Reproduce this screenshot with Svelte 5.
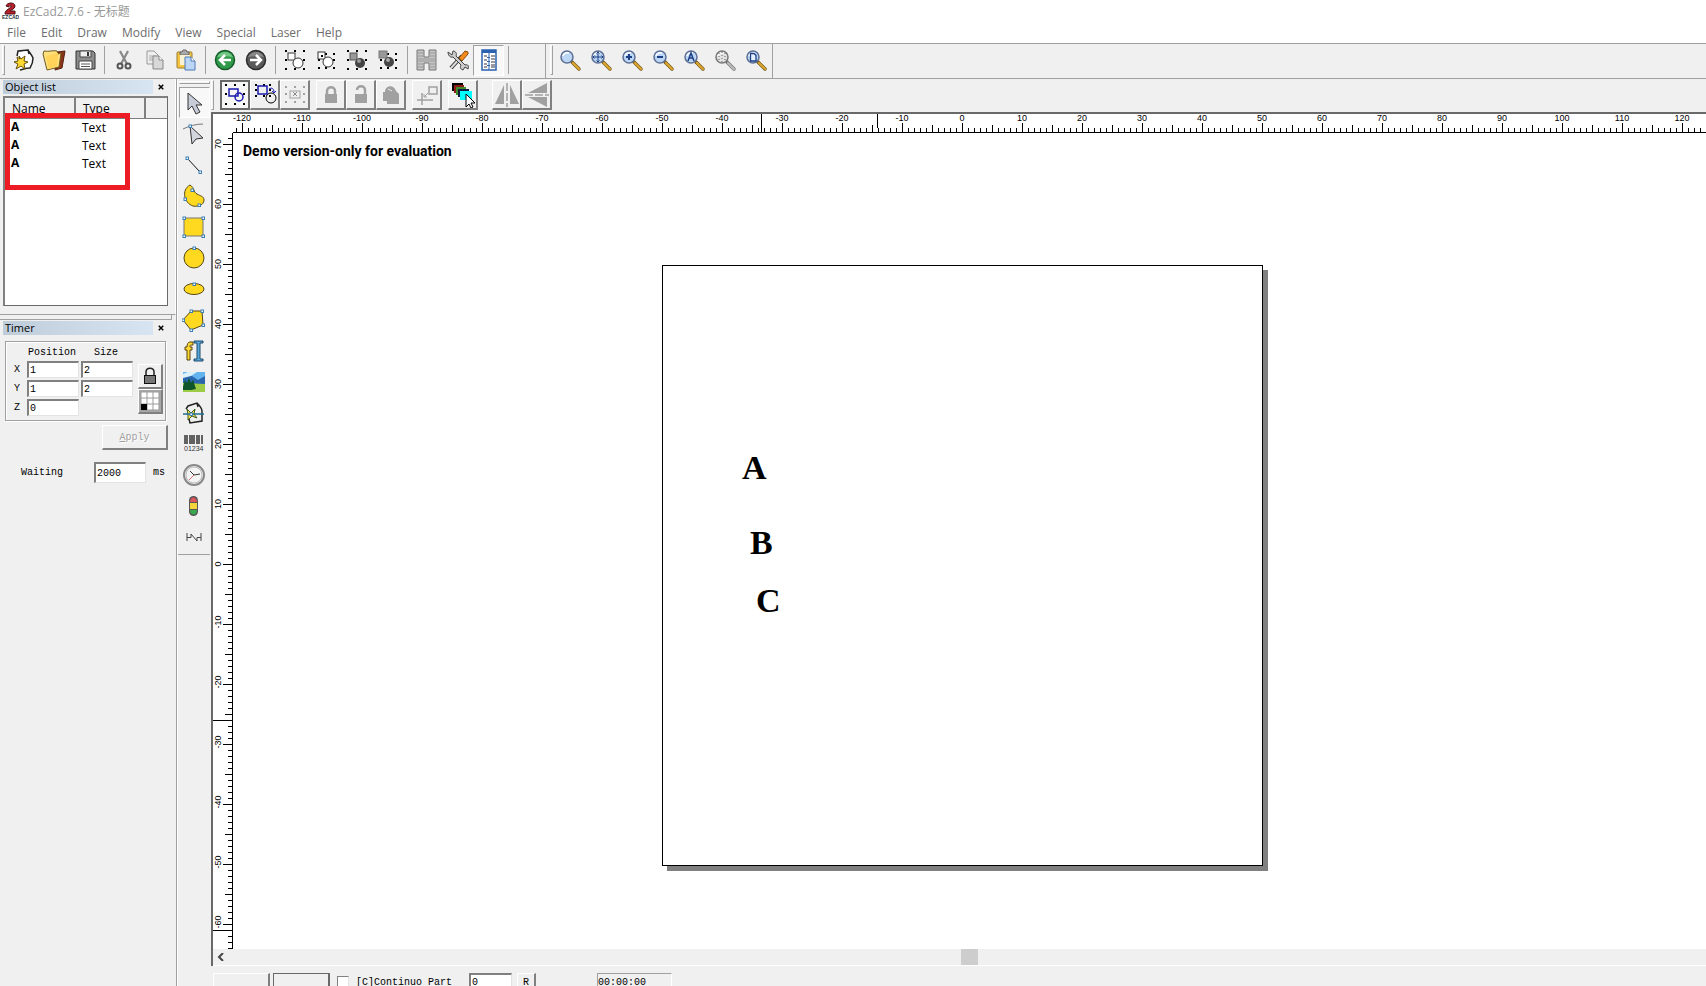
<script lang="ts">
	type Tool = { icon: string; label: string; active?: boolean; disabled?: boolean };

	const menus = ['File', 'Edit', 'Draw', 'Modify', 'View', 'Special', 'Laser', 'Help'];

	const fileTools: Tool[][] = [
		[
			{ icon: 'new', label: 'New' },
			{ icon: 'open', label: 'Open' },
			{ icon: 'save', label: 'Save' },
		],
		[
			{ icon: 'cut', label: 'Cut' },
			{ icon: 'copy', label: 'Copy' },
			{ icon: 'paste', label: 'Paste' },
		],
		[
			{ icon: 'undo', label: 'Undo' },
			{ icon: 'redo', label: 'Redo' },
		],
		[
			{ icon: 'combine', label: 'Combine' },
			{ icon: 'uncombine', label: 'Uncombine' },
			{ icon: 'group', label: 'Group' },
			{ icon: 'ungroup', label: 'Ungroup' },
		],
		[
			{ icon: 'hatch', label: 'Hatch' },
			{ icon: 'options', label: 'Options' },
			{ icon: 'list', label: 'Object list', active: true },
		],
	];

	const zoomTools: Tool[] = [
		{ icon: 'zoom', label: 'Zoom' },
		{ icon: 'zoomPan', label: 'Pan' },
		{ icon: 'zoomIn', label: 'Zoom in' },
		{ icon: 'zoomOut', label: 'Zoom out' },
		{ icon: 'zoomAll', label: 'Zoom all' },
		{ icon: 'zoomSel', label: 'Zoom selection' },
		{ icon: 'zoomPage', label: 'Zoom page' },
	];

	const pickTools: Tool[][] = [
		[
			{ icon: 'pick', label: 'Pick', active: true },
			{ icon: 'rotate', label: 'Rotate' },
			{ icon: 'center', label: 'Center', disabled: true },
		],
		[
			{ icon: 'lock', label: 'Lock', disabled: true },
			{ icon: 'unlock', label: 'Unlock', disabled: true },
			{ icon: 'unlockAll', label: 'Unlock all', disabled: true },
		],
		[{ icon: 'origin', label: 'Put to origin', disabled: true }],
		[{ icon: 'layers', label: 'Pick by pen' }],
		[
			{ icon: 'mirrorH', label: 'Mirror horizontal', disabled: true },
			{ icon: 'mirrorV', label: 'Mirror vertical', disabled: true },
		],
	];

	const drawTools: Tool[] = [
		{ icon: 'arrow', label: 'Select', active: true },
		{ icon: 'node', label: 'Edit nodes' },
		{ icon: 'line', label: 'Line' },
		{ icon: 'curve', label: 'Curve' },
		{ icon: 'rect', label: 'Rectangle' },
		{ icon: 'circle', label: 'Circle' },
		{ icon: 'ellipse', label: 'Ellipse' },
		{ icon: 'polygon', label: 'Polygon' },
		{ icon: 'text', label: 'Text' },
		{ icon: 'bitmap', label: 'Bitmap' },
		{ icon: 'vector', label: 'Vector file' },
		{ icon: 'barcode', label: 'Barcode' },
		{ icon: 'timer', label: 'Timer' },
		{ icon: 'input', label: 'Input port' },
		{ icon: 'output', label: 'Output port' },
	];

	const lens = (inner: string, ring = '#5d6f94', fill = '#bcd6f5', handle = '#d9a72e', edge = '#7a5a1e') => `
		<path d="M13 14l7 7" stroke="${edge}" stroke-width="3.5" stroke-linecap="round"/>
		<path d="M14 15l6 6" stroke="${handle}" stroke-width="2.2" stroke-linecap="round"/>
		<circle cx="8" cy="9" r="6" fill="${fill}" stroke="${ring}" stroke-width="1.5"/>
		<path d="M4 8a4.5 4.5 0 0 1 6-3" stroke="#fff" stroke-width="1.5"/>${inner}`;

	const square = (x: number, y: number, c: string) =>
		`<rect x="${x - 1}" y="${y - 1}" width="2" height="2" fill="${c}"/>`;

	const dots = (xs: number[], ys: number[], c = '#000') =>
		xs.flatMap((x, i) => ys.filter((_, j) => i !== 1 || j !== 1).map((y) => square(x, y, c))).join('');

	const handles = (points: number[][]) =>
		points
			.map(([x, y]) => `<rect x="${x - 1}" y="${y - 1}" width="2.5" height="2.5" fill="#fff" stroke="#3b7fb5"/>`)
			.join('');

	const padlock = '<path d="M7 12h12v9H7z" fill="#a0a0a0"/>';

	const icons: Record<string, string> = {
		new: `<path d="M7 3c4 0 6-1 10-1 1 2 4 5 5 8 0 4-1 7-3 10-4 0-6 1-10 2-2-6-4-12-2-19z" fill="#fff"/>
			<path d="M6 8l1-5c4 0 6-1 10-1 1 2 4 5 5 8 0 4-1 7-3 10-4 0-6 1-10 2M17 2l1 4" fill="none" stroke="#222" stroke-width="1.5"/>
			<path d="M8 8l2 3 4-3-1 5 4 1-4 2 1 5-4-3-5 3 2-5-4-2 4-1-1-4 3 2z" fill="#ffd932" stroke="#66500a"/>`,
		open: `<path d="M15 4l8-1-3 17-7 2z" fill="#8c3417" stroke="#54200c"/>
			<path d="M2 3c5 1 9-1 13 0l1 3 3-1-2 14-12 3-4-16z" fill="#ffe07a" stroke="#6d5a20"/>
			<path d="M4 8l12-3-1 13-8 3z" fill="#ffd25a"/>`,
		save: `<path d="M3 3h17l2 2v16H3z" fill="#8d8d8d" stroke="#333"/>
			<path d="M7 3h11v6H7z" fill="#eee" stroke="#444"/><path d="M14 4h2v4h-2z" fill="#333"/>
			<path d="M6 13h13v8H6z" fill="#fff" stroke="#444"/><path d="M8 16h9M8 18.5h9" stroke="#555"/>`,
		cut: `<path d="M8 3l7 13M16 3L9 16" stroke="#888" stroke-width="2.2"/>
			<circle cx="8" cy="18" r="2.5" fill="none" stroke="#555" stroke-width="2"/>
			<circle cx="16" cy="18" r="2.5" fill="none" stroke="#555" stroke-width="2"/>`,
		copy: `<path d="M4 3h7l4 4v9H4z" fill="#eee" stroke="#999"/><path d="M6 8h7M6 10h7M6 12h7" stroke="#aaa"/>
			<path d="M10 8h6l4 4v9H10z" fill="#d8d8d8" stroke="#888"/><path d="M16 8v4h4" fill="#fff" stroke="#888"/>`,
		paste: `<rect x="3" y="4" width="15" height="16" rx="1" fill="#f4c542" stroke="#9c7c2c"/>
			<path d="M6 7V4h2l1-2h3l1 2h2v3z" fill="#aaa" stroke="#666"/><path d="M6 7h10v10H6z" fill="#faf2d4"/>
			<path d="M11 9h6l4 4v9H11z" fill="#bcd7f5" stroke="#4e78b4"/><path d="M17 9v4h4" fill="#fff" stroke="#4e78b4"/>`,
		undo: `<circle cx="12" cy="12" r="9.500" fill="#2f9a4a" stroke="#175c2c" stroke-width="1.5"/>
			<path d="M4 9a9 9 0 0 1 16 0c-5-1-11-1-16 0z" fill="#72c985"/>
			<path d="M18 12H7m5-5l-5 5 5 5" fill="none" stroke="#fff" stroke-width="2.5"/>`,
		redo: `<circle cx="12" cy="12" r="9.500" fill="#5a5a5a" stroke="#2c2c2c" stroke-width="1.5"/>
			<path d="M4 9a9 9 0 0 1 16 0c-5-1-11-1-16 0z" fill="#888"/>
			<path d="M6 12h11m-5-5l5 5-5 5" fill="none" stroke="#fff" stroke-width="2.5"/>`,
		combine: `${dots([3, 12, 21], [3, 12, 21])}<rect x="5" y="5" width="7" height="7" fill="#fff" stroke="#333"/><circle cx="15" cy="15" r="5" fill="#fff" stroke="#333"/>`,
		uncombine: `${dots([5, 12, 20], [6, 12, 20])}<rect x="4" y="4" width="7" height="7" fill="#fff" stroke="#333"/>${square(8, 8, '#000')}<circle cx="14" cy="14" r="5" fill="#fff" stroke="#333"/>`,
		group: `${dots([3, 12, 21], [3, 12, 21])}<rect x="5" y="5" width="7" height="7" fill="#999" stroke="#555"/><circle cx="15" cy="15" r="5" fill="#444"/><circle cx="14" cy="13" r="2" fill="#999"/>`,
		ungroup: `${dots([5, 12, 20], [6, 12, 20])}<rect x="3" y="3" width="8" height="7" fill="#999" stroke="#777"/><circle cx="13" cy="14" r="5" fill="#444"/><circle cx="12" cy="12" r="2" fill="#aaa"/>`,
		hatch: `<path d="M2 2h7v7h5V2h7v20h-7v-7H9v7H2z" fill="#c4c4c4" stroke="#777"/>
			<path d="M2 5h7M2 8h7M2 11h19M2 13h19M2 16h7M2 19h7M14 5h7M14 8h7M14 16h7M14 19h7" stroke="#999"/>`,
		options: `<path d="M5 20L16 8" stroke="#333" stroke-width="4"/><path d="M5 20L16 8" stroke="#ddd" stroke-width="2"/>
			<path d="M13 10l6-7 3 1v2l-6 7z" fill="#f28a1e" stroke="#8a4a0a"/>
			<path d="M2 4l4 3 1-4c3 0 4 3 3 5l9 9c3-1 4 1 3 4l-3-2-2 3c-3-1-3-3-2-5L7 9C4 10 2 7 2 4z" fill="#ccc" stroke="#444"/>`,
		list: `<path d="M5 2h14v20H5z" fill="#fff" stroke="#2b62b0" stroke-width="1.5"/><path d="M5 2h14v3H5z" fill="#2b62b0"/>
			<path d="M12 5v17" stroke="#2b62b0"/><path d="M10 9.500h3M10 13.500h3M10 17.500h3" stroke="#2b62b0"/>
			<path d="M7 8h3M7 12h3M7 16h3M7 19h3M14 8h4M14 11h4M14 14h4M14 17h4M14 19h4" stroke="#334"/>`,
		zoom: lens(''),
		zoomPan: lens('<path d="M8 4v10M3 9h10M6.5 5.5L8 4l1.5 1.5M6.5 12.5L8 14l1.5-1.5M4.5 7.5L3 9l1.5 1.5M11.5 7.5L13 9l-1.5 1.5" fill="none" stroke="#1d3f84"/>'),
		zoomIn: lens('<path d="M8 6v6M5 9h6" stroke="#1d3f84" stroke-width="2"/>'),
		zoomOut: lens('<path d="M5 9h6" stroke="#1d3f84" stroke-width="2"/>'),
		zoomAll: lens('<path d="M5 13l3-8 3 8M6 10h4" fill="none" stroke="#1d3f84" stroke-width="1.5"/>'),
		zoomSel: lens('<path d="M5 5v9M8 4v10M11 5v9" stroke="#666" stroke-dasharray="1 2"/>', '#777', '#e2e2e2', '#bbb', '#777'),
		zoomPage: lens('<path d="M5.5 5.5H9l2 2V13H5.5z" fill="#e6f0ff" stroke="#1d3f84" stroke-width="1.3"/>'),

		pick: `${dots([4, 13, 22], [3, 12, 22])}<rect x="7" y="7" width="9" height="7" fill="none" stroke="#1a1aae" stroke-width="1.5"/><circle cx="17" cy="15" r="4" fill="none" stroke="#1a1aae" stroke-width="1.5"/>`,
		rotate: `${dots([4, 12, 18], [3, 8, 14])}<rect x="6" y="4" width="9" height="8" fill="none" stroke="#1a1aae" stroke-width="1.5"/><circle cx="19" cy="16" r="5" fill="none" stroke="#000"/><path d="M17 7c3-2 5 0 5 3m-2-1l2 2 2-2" fill="none" stroke="#1a1aae"/>`,
		center: `${dots([4, 13, 22], [5, 12, 20], '#a0a0a0')}<rect x="8" y="9" width="10" height="7" fill="#f0f0f0" stroke="#a0a0a0"/><path d="M11 10l4 4M15 10l-4 4" stroke="#888"/>`,
		lock: `${padlock}<path d="M9 12V9c0-5 8-5 8 0v3" fill="none" stroke="#a0a0a0" stroke-width="2.5"/>`,
		unlock: `${padlock}<path d="M9 8c0-5 8-5 8 0v4" fill="none" stroke="#a0a0a0" stroke-width="2.5"/>`,
		unlockAll: `<path d="M5 10h2c0-7 9-8 11-1l3 3v10H9v-3H5z" fill="#a0a0a0"/><path d="M10 7l4 2" stroke="#eee"/>`,
		origin: `<path d="M3 18h16M8 11v12" stroke="#a0a0a0" stroke-width="1.5"/><rect x="15" y="5" width="8" height="7" fill="none" stroke="#a0a0a0" stroke-width="1.5"/><path d="M14 11l-4 4m0-3v3h3" fill="none" stroke="#a0a0a0"/>`,
		layers: `<path d="M2 1h11v8H2z" fill="#000"/><path d="M4 3h10v8H4z" fill="#8d1a14"/><path d="M6 5h10v8H6z" fill="#3c8d2a"/><path d="M8 7h11v8H8z" fill="#111a3c"/><path d="M10 9h12v9H10z" fill="#0ff"/>
			<path d="M16 12v13l3-3 2 4 2-1-2-4h4z" fill="#fff" stroke="#000"/>`,
		mirrorH: `<path d="M10 3v19H1zM16 3v19h9z" fill="#a0a0a0"/><path d="M13 1v24" stroke="#777" stroke-dasharray="8 2"/>`,
		mirrorV: `<path d="M23 1v10H4zM23 25V15H4z" fill="#a0a0a0"/><path d="M1 13h24" stroke="#777" stroke-dasharray="8 2"/>`,

		arrow: `<path d="M6 2v17l4-4 4 8 4-2-4-7h6z" fill="#c8ccd8" stroke="#333"/>`,
		node: `<path d="M1 7c6-3 13-5 20-5" fill="none" stroke="#777"/><path d="M8 4l2 18 4-5 7-1z" fill="#d3d6df" stroke="#333"/>${handles([[8, 4]])}`,
		line: `<path d="M5 5l13 14" stroke="#111"/>${handles([[5, 5], [18, 19]])}`,
		curve: `<path d="M8 1c-9 5-6 18 3 21 5 1 11-1 11-6 0-4-4-4-7-6-4-2-2-6-7-9z" fill="#ffd91f" stroke="#55481a"/>${handles([[10, 6], [3, 15], [17, 21]])}`,
		rect: `<rect x="2" y="3" width="19" height="18" fill="#ffd91f" stroke="#777"/>${handles([[2, 3], [21, 3], [2, 21], [21, 21]])}`,
		circle: `<circle cx="12" cy="12" r="10" fill="#ffd91f" stroke="#55481a"/>${handles([[12, 2]])}`,
		ellipse: `<ellipse cx="12" cy="12" rx="10" ry="5.5" fill="#ffd91f" stroke="#55481a"/>${handles([[12, 7]])}`,
		polygon: `<path d="M1 12l8-9h11l1 14-12 5z" fill="#ffd91f" stroke="#55481a"/>${handles([[1, 12], [9, 3], [20, 3], [21, 17], [9, 22]])}`,
		text: `<path d="M11 3H8C6 3 5 5 5 8H3v3h2v10h3V11h2V8H8c0-2 0-2 3-2z" fill="#ffd932" stroke="#54430f"/>
			<path d="M12 2h9v2h-3v16h3v2h-9v-2h3V4h-3z" fill="#58a9dc" stroke="#1c4a6c"/>`,
		bitmap: `<path d="M1 2h22v20H1z" fill="#63b4ee"/><path d="M1 8l6-4 9 6 7-4v9H1z" fill="#2a66ae"/><path d="M1 4l5-2h9l-6 4-8 2z" fill="#dceffc"/>
			<path d="M1 13l22 1v8H1z" fill="#9ecb45"/><path d="M1 17l2-7 2 3 2-5 2 5 2-3 3 9-5 1H1z" fill="#0f5527"/>`,
		vector: `<path d="M4 8l2-3 9-3c2 2 5 5 5 8v10l-12 2-1-4M15 2l1 4" fill="none" stroke="#222" stroke-width="1.5"/>
			<path d="M5 8l4 4 4-4-1 5 3 4-5-2-4 4v-5z" fill="#ffe14a" stroke="#3c5a1c"/><path d="M1 13h21" stroke="#1c7090" stroke-width="1.5"/>${handles([[9, 13]])}`,
		barcode: `<path d="M3 3v9M5 3v9M8 3v9M10 3v9M12 3v9M15 3v9M17 3v9M20 3v9" stroke="#333" stroke-width="1.5"/><text x="2" y="19" font-size="7" fill="#333" font-family="Liberation Sans">01234</text>`,
		timer: `<circle cx="12" cy="12" r="10" fill="#f4f4f4" stroke="#888" stroke-width="2"/><circle cx="12" cy="12" r="8" fill="none" stroke="#bbb"/><path d="M8 8l4 4 6-1" fill="none" stroke="#333"/><path d="M12 12l-5 5" stroke="#e07070"/>`,
		input: `<rect x="7" y="2" width="9" height="20" rx="4.5" fill="#555"/><path d="M8 8c0-6 7-6 7 0z" fill="#d9545c"/><path d="M8 9h7v6H8z" fill="#f4d63c"/><path d="M8 16h7c0 6-7 6-7 0z" fill="#38a94c"/>`,
		output: `<path d="M5 8v8M19 8v8M5 12.500h4V9l6 7v-3.500h4" fill="none" stroke="#444"/>`,
	};

	const unit = 6;
	const hOrigin = 729;
	const vOrigin = 431;

	const range = (from: number, to: number) => Array.from({ length: to - from + 1 }, (_, i) => from + i);
	const tick = (v: number) => (v % 10 === 0 ? 10 : v % 5 === 0 ? 8 : 5);

	const hTicks = range(-121, 400).map((v) => `M${hOrigin + v * unit + 0.5} 19v-${tick(v)}`).join('');
	const vTicks = range(-250, 71).map((v) => `M20 ${vOrigin - v * unit + 0.5}h-${tick(v)}`).join('');
	const hLabels = range(-12, 12).map((v) => v * 10);
	const vLabels = range(-6, 7).map((v) => v * 10);

	const objects = [
		{ name: 'A', type: 'Text' },
		{ name: 'A', type: 'Text' },
		{ name: 'A', type: 'Text' },
	];

	const shapes = [
		{ char: 'A', x: 509, y: 315 },
		{ char: 'B', x: 517, y: 390 },
		{ char: 'C', x: 523, y: 448 },
	];

	let continuous = $state(false);
	let waiting = $state('2000');
	let part = $state('0');
</script>

{#snippet toolButton(tool: Tool)}
	<button class="tool" class:active={tool.active} disabled={tool.disabled} aria-label={tool.label} title={tool.label}>
		<svg viewBox="0 0 24 24" fill="none">{@html icons[tool.icon]}</svg>
	</button>
{/snippet}

{#snippet caption(text: string)}
	<header class="caption">
		<h2>{text}</h2>
		<button aria-label="Close {text}"><svg viewBox="0 0 8 8"><path d="M1 1l6 6M7 1L1 7" stroke="#000" stroke-width="2" /></svg></button>
	</header>
{/snippet}

<div class="app">
	<div class="title">
		<svg viewBox="0 0 18 18">
			<path d="M5 4c1-4 9-4 9 0 0 3-4 4-5 5h5v3H4c0-5 6-5 6-8-1-1-2 0-2 1z" fill="#b5202c" stroke="#4c1016" />
			<text x="1" y="17" font-size="5" font-weight="bold" fill="#234" font-family="Liberation Sans">EZCAD</text>
		</svg>
		<span>EzCad2.7.6 - 无标题</span>
	</div>

	<nav class="menu">
		{#each menus as m}
			<button>{m}</button>
		{/each}
	</nav>

	<div class="toolbars">
		<div class="bar main-bar">
			<i class="grip"></i>
			{#each fileTools as group}
				{#each group as tool}{@render toolButton(tool)}{/each}
				<i class="sep"></i>
			{/each}
		</div>
		<div class="bar">
			<i class="grip"></i>
			{#each zoomTools as tool}{@render toolButton(tool)}{/each}
		</div>
	</div>

	<div class="body">
		<aside class="panels">
			<section class="objects">
				{@render caption('Object list')}
				<div class="list">
					<table>
						<thead>
							<tr><th>Name</th><th>Type</th><th></th></tr>
						</thead>
						<tbody>
							{#each objects as o}
								<tr><td class="glyph">{o.name}</td><td>{o.type}</td><td></td></tr>
							{/each}
						</tbody>
					</table>
					<div class="marker"></div>
				</div>
			</section>
			<div class="splitter"></div>

			<section class="timer">
				{@render caption('Timer')}
				<div class="group">
					<div class="coords">
						<span></span><span class="head">Position</span><span class="head">Size</span>
						<label for="px">X</label><input id="px" value="1" /><input aria-label="Size X" value="2" />
						<label for="py">Y</label><input id="py" value="1" /><input aria-label="Size Y" value="2" />
						<label for="pz">Z</label><input id="pz" value="0" />
					</div>
					<div class="side">
						<button class="raised" aria-label="Lock ratio">
							<svg viewBox="0 0 20 20"><path d="M6 9V6c0-5 8-5 8 0v3" fill="none" stroke="#222" stroke-width="1.5" /><rect x="4.5" y="9.5" width="11" height="8" fill="#777" stroke="#111" /></svg>
						</button>
						<button class="raised anchor" aria-label="Anchor">
							<svg viewBox="0 0 20 20"><path d="M1 1h18v18H1z" fill="#fff" /><path d="M1 1h18v18H1zM7 1v18M13 1v18M1 7h18M1 13h18" fill="none" stroke="#999" /><path d="M1 13h6v6H1z" fill="#000" /></svg>
						</button>
					</div>
				</div>
				<button class="raised apply" disabled><u>A</u>pply</button>
				<div class="waiting">
					<label for="waiting">Waiting</label>
					<input id="waiting" bind:value={waiting} />
					<span>ms</span>
				</div>
			</section>
		</aside>

		<div class="palette">
			<div class="draw">
				<i class="grip-h"></i>
				{#each drawTools as tool}{@render toolButton(tool)}{/each}
			</div>
		</div>

		<main>
			<div class="pick-bar">
				<i class="grip"></i>
				{#each pickTools as group}
					<div class="pick-group">
						{#each group as tool}
							<button class="raised" class:pressed={tool.active} disabled={tool.disabled} aria-label={tool.label}>
								<svg viewBox="0 0 26 26" fill="none">{@html icons[tool.icon]}</svg>
							</button>
						{/each}
					</div>
				{/each}
			</div>

			<div class="workspace">
				<div class="corner"></div>
				<svg class="ruler">
					<path d="M0 18.5h4000" />
					<path d={hTicks} />
					<path d="M528.5 0v19M644.5 0v14" />
					{#each hLabels as v}
						<text x={hOrigin + v * unit} y="7">{v}</text>
					{/each}
				</svg>
				<svg class="ruler">
					<path d="M19.5 0v4000" />
					<path d={vTicks} />
					<path d="M0 587.5h20M0 797.5h20" />
					{#each vLabels as v}
						<text transform="translate(8 {vOrigin - v * unit - (v < 0 ? 2 : 0)}) rotate(-90)">{v}</text>
					{/each}
				</svg>
				<div class="canvas">
					<p>Demo version-only for evaluation</p>
					<div class="sheet"></div>
					{#each shapes as s}
						<span class="shape" style="left: {s.x}px; top: {s.y}px">{s.char}</span>
					{/each}
				</div>
				<div class="scroll">
					<button aria-label="Scroll left"><svg viewBox="0 0 8 8"><path d="M6 0L2 4l4 4" fill="none" stroke="#444" stroke-width="2" /></svg></button>
					<div class="thumb"></div>
				</div>
			</div>

			<footer>
				<button class="raised wide" aria-label="Red"></button>
				<button class="raised wide heavy" aria-label="Mark"></button>
				<label class="check"><input type="checkbox" bind:checked={continuous} />[C]Continuo</label>
				<label class="part" for="part">Part</label>
				<input id="part" bind:value={part} />
				<button class="raised reset">R</button>
				<output>00:00:00</output>
			</footer>
		</main>
	</div>
</div>

<style>
	:global(body) {
		margin: 0;
		overflow: hidden;
	}

	.app {
		display: flex;
		flex-direction: column;
		height: 100vh;
		background: #f0f0f0;
		color: #000;
		font-family: 'Open Sans', 'Noto Sans CJK SC', sans-serif;
		font-size: 11px;
	}

	.app * {
		box-sizing: border-box;
	}

	button,
	input {
		margin: 0;
		padding: 0;
		border: none;
		background: none;
		font: inherit;
		color: inherit;
	}

	svg {
		display: block;
	}

	.title {
		display: flex;
		align-items: center;
		gap: 4px;
		height: 22px;
		padding-left: 1px;
		background: #fff;
		color: #999;
		font-size: 12px;
	}

	.title svg {
		width: 18px;
		height: 18px;
	}

	.menu {
		display: flex;
		gap: 15px;
		height: 21px;
		padding-left: 7px;
		background: #fff;
		color: #6d6d6d;
		font-size: 12px;
	}

	.toolbars {
		display: flex;
		height: 36px;
		border-top: 1px solid #a0a0a0;
		border-bottom: 1px solid #a0a0a0;
	}

	.bar {
		display: flex;
		align-items: center;
		padding: 0 0 2px 4px;
		border-right: 1px solid #a0a0a0;
	}

	.main-bar {
		padding-right: 33px;
		padding-left: 2px;
	}

	.bar .grip {
		margin-right: 2px;
	}

	.grip {
		width: 3px;
		height: 30px;
		border: 1px solid #a0a0a0;
		border-top-color: #fff;
		border-left-color: #fff;
	}

	.sep {
		width: 8px;
		height: 28px;
		background: linear-gradient(#a0a0a0, #a0a0a0) center / 1px 100% no-repeat;
	}

	.tool {
		display: grid;
		place-items: center;
		width: 31px;
		height: 31px;
	}

	.tool svg {
		width: 24px;
		height: 24px;
	}

	.tool.active {
		background: #f8f8f8;
		border: 1px solid #a0a0a0;
		border-right-color: #fff;
		border-bottom-color: #fff;
	}

	.body {
		display: flex;
		flex: 1;
		min-height: 0;
	}

	.panels {
		width: 177px;
		border-right: 1px solid #a0a0a0;
	}

	.objects {
		height: 236px;
		padding: 1px 4px 0 3px;
		border-right: 1px solid #fff;
		border-bottom: 1px solid #a0a0a0;
	}

	.caption {
		display: flex;
		align-items: center;
		width: 165px;
		height: 14px;
	}

	.caption h2 {
		flex: 1;
		margin: 0;
		padding-left: 2px;
		background: linear-gradient(90deg, #bfcddb, #d7e4f2);
		font-size: 11px;
		font-weight: normal;
		line-height: 14px;
	}

	.caption button {
		display: grid;
		place-items: center;
		width: 15px;
		height: 14px;
	}

	.caption svg {
		width: 6px;
		height: 6px;
	}

	.list {
		position: relative;
		width: 165px;
		height: 210px;
		margin-top: 2px;
		border: 2px solid #808080;
		border-right: 1px solid #696969;
		border-bottom: 1px solid #696969;
		background: #fff;
	}

	.list table {
		width: 100%;
		border-collapse: collapse;
		table-layout: fixed;
		font-size: 12px;
	}

	.list th {
		height: 20px;
		padding: 2px 0 0 7px;
		border-right: 2px solid #808080;
		border-bottom: 1px solid #808080;
		background: #f0f0f0;
		font-weight: normal;
		line-height: 16px;
		text-align: left;
	}

	.list th:nth-child(-n + 2) {
		width: 70px;
	}

	.list th:last-child {
		border-right: none;
	}

	.list td {
		height: 18px;
		padding: 0 0 0 7px;
		line-height: 18px;
	}

	.list td.glyph {
		padding: 0 0 2px 6px;
		font-weight: bold;
		line-height: 16px;
	}

	/* red annotation laid over the rows */
	.marker {
		position: absolute;
		top: 15px;
		left: 0;
		width: 125px;
		height: 77px;
		border: 5px solid #ed1c24;
	}

	.splitter {
		width: 172px;
		height: 5px;
		border-right: 1px solid #a0a0a0;
		border-bottom: 1px solid #a0a0a0;
	}

	.timer {
		padding: 1px 4px 0 3px;
	}

	.group,
	.apply,
	.waiting,
	footer {
		font-family: 'Liberation Mono', monospace;
		font-size: 10px;
	}

	.group {
		display: flex;
		gap: 5px;
		width: 161px;
		height: 80px;
		margin: 6px 0 0 2px;
		padding: 4px 4px 4px 3px;
		border: 1px solid #a0a0a0;
		box-shadow: inset 1px 1px #fff, 1px 1px #fff;
	}

	.coords {
		display: grid;
		grid-template-columns: 16px 52px 52px;
		grid-template-rows: 13px 17px 17px 17px;
		column-gap: 2px;
		row-gap: 2px;
		align-items: center;
	}

	.coords label {
		padding-left: 5px;
	}

	.head {
		padding-left: 1px;
	}

	.head + .head {
		padding-left: 13px;
	}

	.coords input,
	.waiting input,
	footer > input {
		width: 52px;
		height: 17px;
		padding: 0 1px;
		border: 2px solid #808080;
		border-right: 1px solid #e3e3e3;
		border-bottom: 1px solid #e3e3e3;
		background: #fff;
	}

	.side {
		padding-top: 18px;
	}

	.side .raised {
		width: 25px;
		height: 25px;
	}

	.side svg {
		width: 20px;
		height: 20px;
	}

	.raised {
		display: grid;
		place-items: center;
		border: 1px solid #fff;
		border-right: 2px solid #808080;
		border-bottom: 2px solid #808080;
		background: #f0f0f0;
	}

	.raised.anchor {
		background: #a8a8a8;
	}

	.raised.pressed {
		border: 2px solid #696969;
		background: #f6f6f6;
	}

	.apply {
		display: block;
		width: 66px;
		height: 25px;
		margin: 4px 0 0 99px;
		color: #a0a0a0;
		text-shadow: 1px 1px #fff;
	}

	.waiting {
		display: flex;
		align-items: center;
		margin-top: 12px;
		padding-left: 18px;
	}

	.waiting label {
		width: 73px;
	}

	.waiting input {
		height: 21px;
		margin-right: 7px;
	}

	.palette {
		width: 34px;
		padding: 2px 1px 0 0;
		border-left: 1px solid #fff;
	}

	.draw {
		display: flex;
		flex-direction: column;
		align-items: center;
		padding-bottom: 2px;
		border-bottom: 1px solid #a0a0a0;
	}

	.grip-h {
		width: 31px;
		height: 3px;
		margin-bottom: 3px;
		border: 1px solid #a0a0a0;
		border-top-color: #fff;
		border-left-color: #fff;
	}

	main {
		display: flex;
		flex: 1;
		flex-direction: column;
		min-width: 0;
	}

	.pick-bar {
		display: flex;
		align-items: center;
		gap: 6px;
		height: 33px;
		padding-bottom: 1px;
	}

	.pick-group {
		display: flex;
	}

	.pick-group:last-child {
		margin-left: 8px;
	}

	.pick-group .raised {
		width: 30px;
		height: 30px;
	}

	.pick-group svg {
		width: 26px;
		height: 26px;
	}

	.workspace {
		display: grid;
		flex: 1;
		grid-template-columns: 20px 1fr;
		grid-template-rows: 19px 1fr 17px;
		min-height: 0;
		border-top: 2px solid #696969;
		border-left: 2px solid #696969;
		background: #fff;
		overflow: hidden;
	}

	.ruler {
		width: 100%;
		height: 100%;
		overflow: hidden;
		background: #fff;
	}

	.ruler path {
		stroke: #000;
		stroke-width: 1;
	}

	.ruler text {
		font-family: 'Liberation Sans', sans-serif;
		font-size: 9px;
		text-anchor: middle;
		fill: #000;
	}

	.canvas {
		position: relative;
		overflow: hidden;
		background: #fff;
	}

	.canvas p {
		margin: 10px 0 0 10px;
		font-family: Roboto, sans-serif;
		font-size: 14px;
		font-weight: bold;
		line-height: 17px;
	}

	.sheet {
		position: absolute;
		top: 132px;
		left: 429px;
		width: 601px;
		height: 601px;
		border: 1px solid #000;
		box-shadow: 5px 5px #808080;
		background: #fff;
	}

	.shape {
		position: absolute;
		font-family: 'Liberation Serif', serif;
		font-size: 34px;
		font-weight: bold;
		line-height: 40px;
	}

	.scroll {
		display: flex;
		grid-column: 1 / -1;
		padding-left: 4px;
		border-bottom: 1px solid #fff;
		background: #f0f0f0;
	}

	.scroll button {
		width: 8px;
	}

	.scroll svg {
		width: 8px;
		height: 8px;
	}

	.thumb {
		width: 17px;
		margin-left: 736px;
		background: #cdcdcd;
	}

	footer {
		display: flex;
		flex: none;
		align-items: flex-start;
		height: 20px;
		padding: 7px 0 0 2px;
		overflow: hidden;
	}

	footer .wide {
		width: 57px;
		height: 24px;
		margin-right: 3px;
	}

	footer .heavy {
		border: 1px solid #696969;
		border-right: 2px solid #696969;
	}

	.check {
		display: flex;
		align-items: center;
		height: 18px;
		margin-left: 4px;
	}

	.check input {
		appearance: none;
		width: 12px;
		height: 12px;
		margin-right: 7px;
		border: 1px solid #808080;
		border-right-color: #e3e3e3;
		background: #fff;
	}

	.part {
		margin-left: 6px;
		line-height: 20px;
	}

	footer > input {
		width: 43px;
		height: 18px;
		margin-left: 17px;
	}

	.reset {
		width: 19px;
		height: 20px;
		margin-left: 5px;
	}

	output {
		width: 75px;
		height: 20px;
		margin-left: 61px;
		border: 1px solid #a0a0a0;
		border-right-color: #fff;
		line-height: 18px;
	}
</style>
